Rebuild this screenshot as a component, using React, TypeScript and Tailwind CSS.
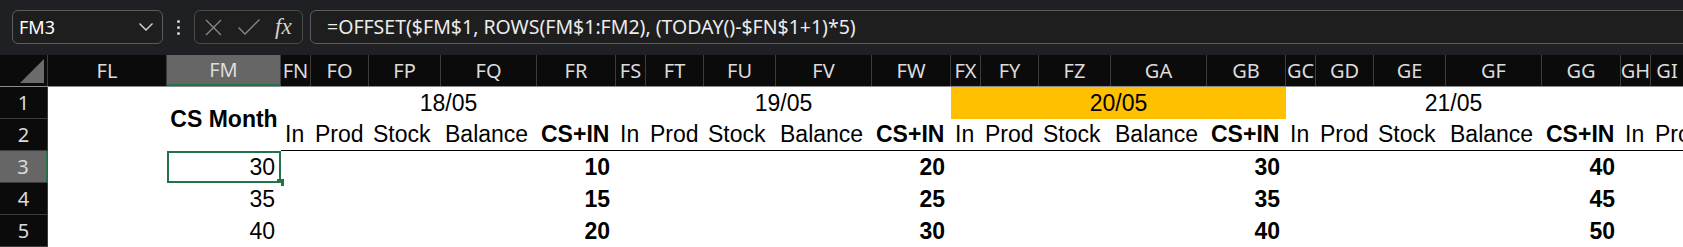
import React from 'react';

const groups = ['18/05', '19/05', '20/05', '21/05'];
const labels = ['In', 'Prod', 'Stock', 'Balance', 'CS+IN'];
const widths = ['w-[30px]', 'w-[58px]', 'w-[72px]', 'w-[96px]', 'w-[79px]'];

const colLetters = [
  ['FN', 'FO', 'FP', 'FQ', 'FR'],
  ['FS', 'FT', 'FU', 'FV', 'FW'],
  ['FX', 'FY', 'FZ', 'GA', 'GB'],
  ['GC', 'GD', 'GE', 'GF', 'GG'],
];

const dataRows = [
  { n: 3, cs: 30, vals: [10, 20, 30, 40] },
  { n: 4, cs: 35, vals: [15, 25, 35, 45] },
  { n: 5, cs: 40, vals: [20, 30, 40, 50] },
];

const cellFont = "font-['Liberation_Sans',Arial,sans-serif] text-[23px] text-black";
const hdrFont = "font-['Noto_Sans',sans-serif] text-[20px] text-[#dcdcdc]";

const HeaderCell = ({ label, w, selected = false }: { label: string; w: string; selected?: boolean }) => (
  <div
    className={`${w} h-full shrink-0 flex items-center justify-center overflow-hidden whitespace-nowrap border-r border-[#3d3d3d] ${
      selected ? 'bg-[#666666] border-b-2 border-b-[#217346]' : ''
    }`}
  >
    {label}
  </div>
);

const RowHeader = ({ n, selected = false }: { n: number; selected?: boolean }) => (
  <div
    className={`w-[48px] h-[32px] shrink-0 flex items-center justify-center border-b border-[#3d3d3d] ${hdrFont} ${
      selected ? 'bg-[#666666] border-r-2 border-r-[#217346]' : 'bg-[#0b0b0b] border-r border-r-[#3d3d3d]'
    }`}
  >
    {n}
  </div>
);

const TopBar = () => (
  <div className="h-[55px] shrink-0 bg-[#1f2023] flex items-start pt-[10px] pl-[12px] overflow-hidden">
    {/* name box */}
    <div className="w-[151px] h-[34px] shrink-0 rounded-[6px] border border-[#5c5c5c] bg-[#1e1e1e] flex items-center justify-between pl-[6px] pr-[8px]">
      <span className="font-['Noto_Sans',sans-serif] text-[18px] text-white">FM3</span>
      <svg width="16" height="10" viewBox="0 0 16 10" fill="none">
        <path d="M1.5 1.5 L8 8 L14.5 1.5" stroke="#d6d6d6" strokeWidth="1.4" />
      </svg>
    </div>

    {/* vertical dots */}
    <div className="w-[31px] h-[34px] shrink-0 flex flex-col items-center justify-center gap-[3px]">
      <span className="w-[3px] h-[3px] rounded-full bg-[#cfcfcf]" />
      <span className="w-[3px] h-[3px] rounded-full bg-[#cfcfcf]" />
      <span className="w-[3px] h-[3px] rounded-full bg-[#cfcfcf]" />
    </div>

    {/* cancel / enter / fx */}
    <div className="w-[109px] h-[34px] shrink-0 rounded-[6px] border border-[#4a4a4a] bg-[#1e1e1e] flex items-center pl-[9px]">
      <svg width="19" height="19" viewBox="0 0 19 19" fill="none">
        <path d="M2 2 L17 17 M17 2 L2 17" stroke="#8a8a8a" strokeWidth="1.3" />
      </svg>
      <svg width="24" height="18" viewBox="0 0 24 18" fill="none" className="ml-[14px]">
        <path d="M1.5 9.5 L8 16 L22.5 1.5" stroke="#8a8a8a" strokeWidth="1.3" />
      </svg>
      <span className="ml-[14px] font-['Liberation_Serif',serif] italic text-[23px] leading-none text-[#d4d4d4] -mt-[2px]">
        fx
      </span>
    </div>

    {/* formula */}
    <div className="ml-[7px] -mr-[10px] flex-1 h-[34px] rounded-[6px] border border-[#5c5c5c] bg-[#1e1e1e] flex items-center pl-[16px]">
      <span className="font-['Noto_Sans',sans-serif] text-[19.5px] text-[#ececec] whitespace-nowrap">
        =OFFSET($FM$1, ROWS(FM$1:FM2), (TODAY()-$FN$1+1)*5)
      </span>
    </div>
  </div>
);

const ColumnHeaders = () => (
  <div className={`h-[32px] shrink-0 flex bg-[#0b0b0b] border-b border-[#8a8a8a] ${hdrFont}`}>
    <div className="w-[48px] h-full shrink-0 border-r border-[#3d3d3d] flex items-end justify-end pr-[3px] pb-[3px]">
      <svg width="24" height="24" viewBox="0 0 24 24">
        <path d="M24 0 L24 24 L0 24 Z" fill="#6b6b6b" />
      </svg>
    </div>
    <HeaderCell label="FL" w="w-[119px]" />
    <HeaderCell label="FM" w="w-[114px]" selected />
    {colLetters.map((g, gi) =>
      g.map((l, i) => <HeaderCell key={`${gi}-${l}`} label={l} w={widths[i]} />)
    )}
    <HeaderCell label="GH" w="w-[30px]" />
    <div className="flex-1 h-full flex items-center justify-center overflow-hidden">GI</div>
  </div>
);

const HeadingRows = () => (
  <div className={`flex h-[64px] shrink-0 ${cellFont}`}>
    <div className="flex flex-col">
      <RowHeader n={1} />
      <RowHeader n={2} />
    </div>
    <div className="w-[119px] shrink-0 bg-white" />
    <div className="w-[114px] shrink-0 bg-white flex items-center justify-center font-bold whitespace-nowrap">
      CS Month
    </div>
    {groups.map((d, gi) => (
      <div key={d} className="w-[335px] shrink-0 flex flex-col bg-white">
        <div className={`h-[32px] flex items-center justify-center ${gi === 2 ? 'bg-[#ffc000]' : ''}`}>{d}</div>
        <div className="h-[32px] flex border-b border-black">
          {labels.map((l, i) => (
            <div
              key={l}
              className={`${widths[i]} shrink-0 flex items-center pl-[4px] whitespace-nowrap ${i === 4 ? 'font-bold' : ''}`}
            >
              {l}
            </div>
          ))}
        </div>
      </div>
    ))}
    <div className="w-[30px] shrink-0 flex flex-col bg-white">
      <div className="h-[32px]" />
      <div className="h-[32px] flex items-center pl-[4px] border-b border-black">In</div>
    </div>
    <div className="flex-1 flex flex-col bg-white overflow-hidden">
      <div className="h-[32px]" />
      <div className="h-[32px] flex items-center pl-[4px] border-b border-black whitespace-nowrap">Prod</div>
    </div>
  </div>
);

const DataRow = ({ n, cs, vals }: { n: number; cs: number; vals: number[] }) => {
  const sel = n === 3;
  return (
    <div className={`flex h-[32px] shrink-0 ${cellFont}`}>
      <RowHeader n={n} selected={sel} />
      <div className="w-[119px] shrink-0 bg-white" />
      <div
        className={`relative w-[114px] shrink-0 bg-white flex items-center justify-end ${
          sel ? 'border-2 border-[#217346] pr-[4px]' : 'pr-[6px]'
        }`}
      >
        {cs}
        {sel && <span className="absolute -right-[5px] -bottom-[5px] w-[7px] h-[7px] bg-[#217346]" />}
      </div>
      {vals.map((v, gi) => (
        <div key={gi} className="w-[335px] shrink-0 flex bg-white">
          <div className="w-[256px] shrink-0" />
          <div className="w-[79px] shrink-0 flex items-center justify-end pr-[6px] font-bold">{v}</div>
        </div>
      ))}
      <div className="flex-1 bg-white" />
    </div>
  );
};

export default function App() {
  return (
    <div className="w-screen h-screen overflow-hidden flex flex-col bg-white">
      <TopBar />
      <ColumnHeaders />
      <HeadingRows />
      {dataRows.map((r) => (
        <DataRow key={r.n} {...r} />
      ))}
    </div>
  );
}
